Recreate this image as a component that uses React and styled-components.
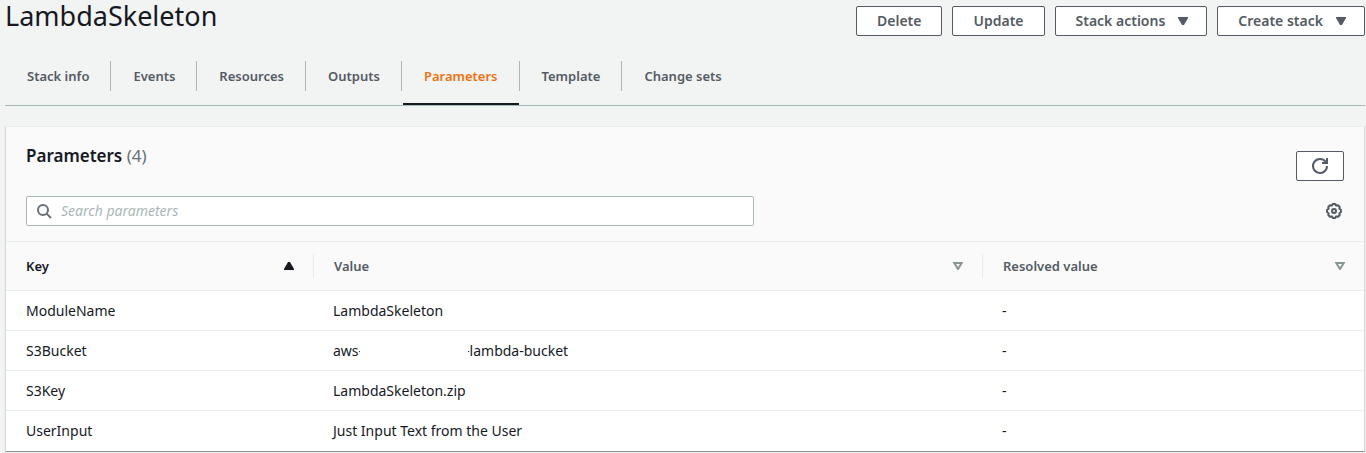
import React from "react";
import styled, { createGlobalStyle } from "styled-components";

const GlobalStyle = createGlobalStyle`
  *, *::before, *::after { box-sizing: border-box; }
  body {
    margin: 0;
    background: #f2f3f3;
    color: #16191f;
    font-family: "Noto Sans", "Open Sans", sans-serif;
    font-size: 14px;
    line-height: 20px;
  }
`;

const Page = styled.main`
  padding: 0 1px 0 5px;
`;

const Header = styled.header`
  display: flex;
  justify-content: space-between;
  align-items: flex-start;
`;

const Title = styled.h1`
  margin: 0;
  font-size: 27px;
  line-height: 32px;
  font-weight: 400;
`;

const Actions = styled.div`
  display: flex;
  gap: 10px;
  margin-top: 6px;
`;

const Button = styled.button`
  display: inline-flex;
  align-items: center;
  justify-content: center;
  gap: 13px;
  height: 30px;
  padding: 0 ${(p) => (p.$menu ? 18 : 20)}px 0 20px;
  border: 1px solid #545b64;
  border-radius: 2px;
  background: #fff;
  color: #545b64;
  font: inherit;
  font-weight: 600;
  white-space: nowrap;
`;

const IconButton = styled(Button)`
  width: 48px;
  padding: 0;
`;

const Tabs = styled.nav`
  display: flex;
  margin-top: 25px;
  border-bottom: 1px solid #aab7b8;
`;

const Tab = styled.a`
  position: relative;
  height: 30px;
  margin-bottom: 14px;
  padding: 0 21px 0 22px;
  border-right: 1px solid #aab7b8;
  color: ${(p) => (p.$active ? "#ec7211" : "#545b64")};
  font-size: 13px;
  font-weight: 600;
  line-height: 30px;
  text-decoration: none;
  white-space: nowrap;

  &:last-child { border-right: 0; }

  &::after {
    content: "";
    display: ${(p) => (p.$active ? "block" : "none")};
    position: absolute;
    right: 0;
    bottom: -14px;
    left: 1px;
    height: 2px;
    background: #16191f;
  }
`;

const Panel = styled.section`
  margin-top: 20px;
  border: 1px solid #d5dbdb;
  border-top-color: #eaeded;
  border-bottom-color: #879596;
  background: #fff;
  box-shadow: 0 1px 1px #d5dbdb;
`;

const PanelHeader = styled.div`
  padding: 15px 20px;
  background: #fafafa;
  border-bottom: 1px solid #eaeded;
`;

const HeadingRow = styled.div`
  display: flex;
  justify-content: space-between;
  align-items: flex-start;

  ${IconButton} { margin-top: 9px; }
`;

const Heading = styled.h2`
  margin: 0;
  font-size: 17px;
  line-height: 28px;
  font-weight: 600;
`;

const Count = styled.span`
  color: #687078;
  font-weight: 400;
`;

const ToolRow = styled.div`
  display: flex;
  justify-content: space-between;
  align-items: center;
  margin-top: 15px;
`;

const SearchBox = styled.label`
  display: flex;
  align-items: center;
  gap: 9px;
  flex: 0 1 728px;
  height: 30px;
  padding: 0 10px;
  border: 1px solid #aab7b8;
  border-radius: 2px;
  background: #fff;
`;

const SearchInput = styled.input`
  flex: 1;
  min-width: 0;
  padding: 0;
  border: 0;
  outline: 0;
  background: transparent;
  color: inherit;
  font: inherit;

  &::placeholder { color: #aab7b8; font-style: italic; opacity: 1; }
`;

const GearButton = styled.button`
  display: flex;
  padding: 2px;
  border: 0;
  background: transparent;
`;

const Table = styled.table`
  width: 100%;
  border-collapse: separate;
  border-spacing: 0;
  table-layout: fixed;
`;

const HeadCell = styled.th`
  width: ${(p) => p.$width || "auto"};
  height: 49px;
  padding: 0;
  border-bottom: 1px solid #eaeded;
  background: #fafafa;
  color: ${(p) => (p.$sorted ? "#16191f" : "#545b64")};
  font-size: 13px;
  font-weight: 600;
  text-align: left;
`;

const HeadContent = styled.div`
  display: flex;
  justify-content: space-between;
  align-items: center;
  height: 24px;
  padding: 0 19px 0 20px;
  border-right: ${(p) => (p.$last ? "0" : "1px solid #eaeded")};
`;

const Row = styled.tr`
  &:not(:last-child) td { border-bottom: 1px solid #eaeded; }
`;

const Cell = styled.td`
  height: 40px;
  padding: 0 20px 0 19px;

  &:first-child { padding-left: 20px; }
`;

const Redaction = styled.span`
  position: relative;
  display: inline-block;
  width: 108px;
  height: 16px;
  margin: 0 -3px;
  background: #fff;
  vertical-align: middle;
`;

const Caret = () => (
  <svg width="10" height="8" viewBox="0 0 10 8" aria-hidden="true">
    <path d="M0 0H10V1L6 8H4L0 1Z" fill="#545b64" />
  </svg>
);

const SortIcon = ({ active }) =>
  active ? (
    <svg width="10" height="8" viewBox="0 0 10 8" aria-hidden="true">
      <path d="M4 0H6L10 7V8H0V7Z" fill="#16191f" />
    </svg>
  ) : (
    <svg width="10" height="8" viewBox="0 0 10 8" aria-hidden="true">
      <path d="M1.3 1H8.7L5 7Z" fill="none" stroke="#879596" strokeWidth="2" />
    </svg>
  );

const SearchIcon = () => (
  <svg width="15" height="15" viewBox="0 0 15 15" fill="none" stroke="#687078" strokeWidth="2" aria-hidden="true">
    <circle cx="6" cy="6" r="5" />
    <path d="M9.6 9.6L14 14" />
  </svg>
);

const RefreshIcon = () => (
  <svg width="18" height="18" viewBox="0 0 18 18" fill="none" stroke="#545b64" strokeWidth="2" aria-hidden="true">
    <path d="M16 9A7 7 0 1 1 14.6 4.8" />
    <path d="M11 6H16V1" />
  </svg>
);

const gearPath = () => {
  const points = [];
  for (let i = 0; i < 8; i += 1) {
    [[-10, 7], [10, 7], [22.5, 5.8]].forEach(([offset, radius]) => {
      const angle = ((i * 45 + offset) * Math.PI) / 180;
      points.push(`${(8 + radius * Math.cos(angle)).toFixed(2)} ${(8 + radius * Math.sin(angle)).toFixed(2)}`);
    });
  }
  return `M${points.join("L")}Z`;
};

const GearIcon = () => (
  <svg width="16" height="16" viewBox="0 0 16 16" fill="none" stroke="#545b64" strokeWidth="2" strokeLinejoin="round" aria-hidden="true">
    <path d={gearPath()} />
    <circle cx="8" cy="8" r="2" />
  </svg>
);

const tabs = ["Stack info", "Events", "Resources", "Outputs", "Parameters", "Template", "Change sets"];

const rows = [
  { key: "ModuleName", value: "LambdaSkeleton" },
  { key: "S3Bucket", value: <>aws-<Redaction />-lambda-bucket</> },
  { key: "S3Key", value: "LambdaSkeleton.zip" },
  { key: "UserInput", value: "Just Input Text from the User" },
];

export default function App() {
  return (
    <>
      <GlobalStyle />
      <Page>
        <Header>
          <Title>LambdaSkeleton</Title>
          <Actions>
            <Button type="button">Delete</Button>
            <Button type="button">Update</Button>
            <Button type="button" $menu>Stack actions <Caret /></Button>
            <Button type="button" $menu>Create stack <Caret /></Button>
          </Actions>
        </Header>
        <Tabs>
          {tabs.map((name) => (
            <Tab key={name} href="#" $active={name === "Parameters"}>{name}</Tab>
          ))}
        </Tabs>
        <Panel>
          <PanelHeader>
            <HeadingRow>
              <Heading>Parameters <Count>(4)</Count></Heading>
              <IconButton type="button" aria-label="Refresh"><RefreshIcon /></IconButton>
            </HeadingRow>
            <ToolRow>
              <SearchBox>
                <SearchIcon />
                <SearchInput type="text" placeholder="Search parameters" aria-label="Search parameters" />
              </SearchBox>
              <GearButton type="button" aria-label="Preferences"><GearIcon /></GearButton>
            </ToolRow>
          </PanelHeader>
          <Table>
            <thead>
              <tr>
                <HeadCell $width="308px" $sorted><HeadContent>Key <SortIcon active /></HeadContent></HeadCell>
                <HeadCell><HeadContent>Value <SortIcon /></HeadContent></HeadCell>
                <HeadCell $width="381px"><HeadContent $last>Resolved value <SortIcon /></HeadContent></HeadCell>
              </tr>
            </thead>
            <tbody>
              {rows.map((row) => (
                <Row key={row.key}>
                  <Cell>{row.key}</Cell>
                  <Cell>{row.value}</Cell>
                  <Cell>-</Cell>
                </Row>
              ))}
            </tbody>
          </Table>
        </Panel>
      </Page>
    </>
  );
}
